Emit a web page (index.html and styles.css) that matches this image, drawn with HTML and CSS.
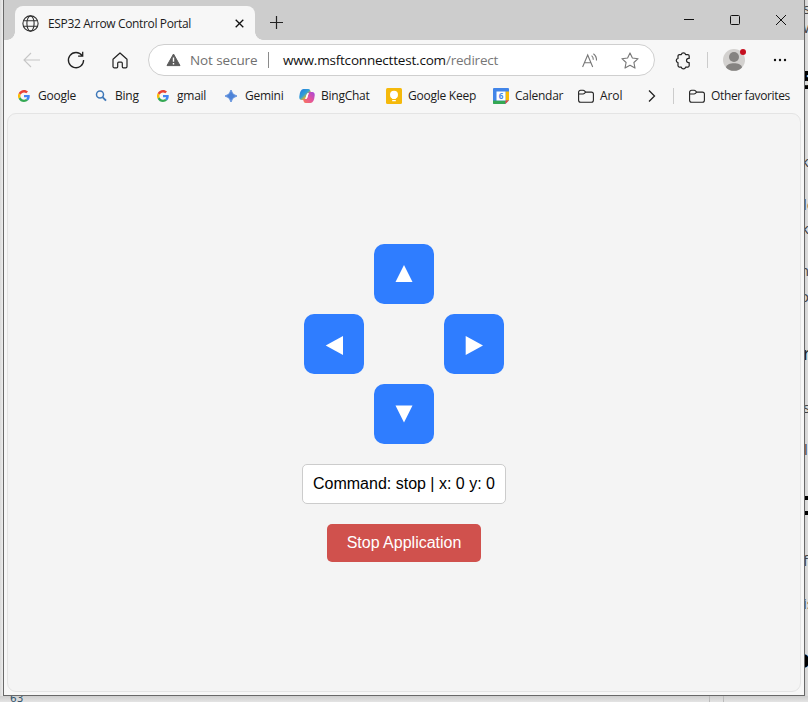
FILE: index.html
```html
<!DOCTYPE html>
<html lang="en">
<head>
<meta charset="utf-8">
<title>ESP32 Arrow Control Portal</title>
<link rel="stylesheet" href="styles.css">
</head>
<body>
<svg width="0" height="0" class="defs">
  <defs>
    <linearGradient id="cop" x1="0" y1="0" x2="1" y2="1"><stop offset="0" stop-color="#2478dd"/><stop offset=".45" stop-color="#2f9fd8"/><stop offset=".65" stop-color="#d9b633"/><stop offset="1" stop-color="#f3a433"/></linearGradient>
    <linearGradient id="cop2" x1="1" y1="0" x2="0" y2="1"><stop offset="0" stop-color="#a447dc"/><stop offset=".5" stop-color="#e3539c"/><stop offset="1" stop-color="#fb7b55"/></linearGradient>
    <symbol id="g" viewBox="0 0 48 48"><path fill="#ea4335" d="M24 9.5c3.5 0 6.700 1.200 9.200 3.600l6.900-6.900C35.900 2.400 30.500 0 24 0 14.600 0 6.500 5.400 2.600 13.200l8 6.200C12.400 13.700 17.700 9.500 24 9.500z"/><path fill="#4285f4" d="M47 24.500c0-1.600-.2-3.100-.4-4.500H24v9h12.900c-.6 3-2.300 5.500-4.800 7.200l7.700 6C44.400 38 47 31.800 47 24.500z"/><path fill="#fbbc05" d="M10.500 28.600a14.500 14.500 0 0 1 0-9.200l-8-6.200a24 24 0 0 0 0 21.600z"/><path fill="#34a853" d="M24 48c6.500 0 11.900-2.100 15.900-5.800l-7.700-6c-2.200 1.500-4.900 2.300-8.200 2.300-6.300 0-11.600-4.200-13.500-9.900l-8 6.200C6.500 42.600 14.600 48 24 48z"/></symbol>
    <symbol id="folder" viewBox="0 0 16 16"><path d="M.6 4.200a2 2 0 0 1 2-2h2.600c.6 0 .9.200 1.300.6l1.200 1.300h5.700a2 2 0 0 1 2 2v6.100a2 2 0 0 1-2 2H2.600a2 2 0 0 1-2-2zM.6 6h4.500c.6 0 .9-.2 1.300-.6l1.300-1.300" fill="none" stroke="#222" stroke-width="1.100"/></symbol>
  </defs>
</svg>
<div class="backdrop">
  <div class="side">
    <span class="s1">s</span><span class="s2">w</span><span class="s3 bold">5</span><span class="s4">c</span><span class="s5">k</span><span class="s6">lo</span><span class="s7">k</span><span class="s8">n</span><span class="s9">o</span><span class="s10 bold2">r</span><span class="s11">s</span><span class="s12">l</span><span class="s13"></span><span class="s14">f</span><span class="s15">is</span><span class="s16 bold">o</span>
  </div>
  <div class="foot"><span class="line-no">63</span><i class="guide"></i></div>
</div>
<div class="window">
  <header class="titlebar">
    <div class="tab">
      <svg class="globe" width="17" height="17" viewBox="0 0 17 17" fill="none" stroke="#303030" stroke-width="1.100"><circle cx="8.500" cy="8.500" r="7.600"/><ellipse cx="8.500" cy="8.500" rx="3.600" ry="7.600"/><path d="M1.600 5.700h13.800M1.600 11.300h13.800"/></svg>
      <span class="tab-title">ESP32 Arrow Control Portal</span>
      <svg class="tab-close" width="9" height="9" viewBox="0 0 9 9"><path d="M.7.7l7.600 7.600M8.300.7L.7 8.300" stroke="#111" stroke-width="1.300"/></svg>
    </div>
    <svg class="new-tab" width="14" height="14" viewBox="0 0 14 14"><path d="M6.500 0v13M0 6.500h13" stroke="#222" stroke-width="1.200"/></svg>
    <div class="caption">
      <svg width="46" height="40" viewBox="0 0 46 40"><path d="M18 19.500h10" stroke="#111"/></svg>
      <svg width="46" height="40" viewBox="0 0 46 40"><rect x="18.500" y="15.500" width="9" height="9" rx="1" fill="none" stroke="#111"/></svg>
      <svg width="46" height="40" viewBox="0 0 46 40"><path d="M18 15l10 10M28 15L18 25" stroke="#111"/></svg>
    </div>
  </header>
  <nav class="toolbar">
    <svg class="back" width="17" height="16" viewBox="0 0 17 16" fill="none" stroke="#c6c6c6" stroke-width="1.100"><path d="M17 8H1M8 1L1 8l7 7"/></svg>
    <svg class="reload" width="18" height="18" viewBox="0 0 18 18" fill="none" stroke="#222" stroke-width="1.300"><path d="M15.200 4.700A7.600 7.600 0 1 0 16.600 9M15.700.8v4.400h-4.600"/></svg>
    <svg class="home" width="16" height="17" viewBox="0 0 16 17" fill="none" stroke="#222" stroke-width="1.200" stroke-linejoin="round"><path d="M1 7.300L8 1l7 6.300v7.200a1.300 1.300 0 0 1-1.300 1.300h-2.400a1 1 0 0 1-1-1v-3.600a1 1 0 0 0-1-1H6.700a1 1 0 0 0-1 1v3.600a1 1 0 0 1-1 1H2.300A1.300 1.300 0 0 1 1 14.500z"/></svg>
    <div class="address">
      <svg class="warn" width="15" height="14" viewBox="0 0 15 14"><path d="M7.500 1L14 12.600H1z" fill="#5c5c5c" stroke="#5c5c5c" stroke-linejoin="round"/><path d="M7.500 4.500v4.300M7.500 10v1.500" stroke="#fff" stroke-width="1.400"/></svg>
      <span class="not-secure">Not secure</span>
      <i class="url-sep"></i>
      <span class="url"><span class="host">www.msftconnecttest.com</span><span class="path">/redirect</span></span>
      <svg class="read" width="16" height="15" viewBox="0 0 16 15" fill="none" stroke="#777" stroke-width="1.100"><path d="M.6 14L5.700 2l5 12M2.500 9.800h6.400M9.600 2.600q1.800 1.400 1.700 4.100M11.400.7q3.300 2.300 3.100 6.900"/></svg>
      <svg class="star" width="18" height="17" viewBox="0 0 18 17" fill="none" stroke="#777" stroke-width="1.100" stroke-linejoin="round"><path d="M9 .9l2.400 5.100 5.700.7-4.200 3.800 1.100 5.600L9 13.300l-5 2.800 1.100-5.600L.9 6.700l5.700-.7z"/></svg>
    </div>
    <svg class="ext" width="16" height="17" viewBox="0 0 16 17" fill="none" stroke="#222" stroke-width="1.200" stroke-linejoin="round"><path d="M4.500 2.600h1.800a2.200 2.200 0 0 1 4.300 0h2.100a1.500 1.500 0 0 1 1.500 1.500v2.300h-.6a2.100 2.100 0 0 0 0 4.200h.6v3a1.500 1.500 0 0 1-1.500 1.500h-2.100a2.200 2.200 0 0 1-4.300 0H4.500A1.500 1.500 0 0 1 3 13.600v-2.900a2.200 2.200 0 0 1 0-4.300V4.100a1.500 1.500 0 0 1 1.500-1.500z"/></svg>
    <i class="tool-sep"></i>
    <svg class="avatar" width="25" height="24" viewBox="0 0 25 24"><circle cx="11" cy="13" r="11" fill="#d3d1cf"/><circle cx="11" cy="10" r="5" fill="#858381"/><path d="M3 20.400C3.500 14.800 18.500 14.800 19 20.400A11 11 0 0 1 3 20.400z" fill="#858381"/><circle cx="20" cy="5" r="3" fill="#c50f1f"/></svg>
    <svg class="more" width="14" height="4" viewBox="0 0 14 4" fill="#111"><circle cx="2" cy="2" r="1.200"/><circle cx="7" cy="2" r="1.200"/><circle cx="12" cy="2" r="1.200"/></svg>
  </nav>
  <div class="favorites">
    <a class="fav"><svg class="small"><use href="#g"/></svg><span>Google</span></a>
    <a class="fav"><svg viewBox="0 0 16 16" fill="none" stroke="#3f78b8"><circle cx="7" cy="6.500" r="3.500" stroke-width="1.500"/><path d="M9.500 9.200l3.500 3.500" stroke-width="1.900"/></svg><span>Bing</span></a>
    <a class="fav"><svg class="small"><use href="#g"/></svg><span>gmail</span></a>
    <a class="fav"><svg viewBox="0 0 16 16"><path d="M8 2Q9 7 14 8 9 9 8 14 7 9 2 8 7 7 8 2z" fill="#4d83d8" stroke="#4d83d8" stroke-width=".8"/></svg><span>Gemini</span></a>
    <a class="fav"><svg viewBox="0 0 16 16"><path d="M4.500 1h5q1.500 0 2 2l.5 2H9.500Q8 5 7.500 7L6 12H2.800Q0 12 .3 8.500 1 1 4.500 1z" fill="url(#cop)"/><path d="M11.500 15h-5q-1.500 0-2-2L4 11h2.500Q8 11 8.500 9L10 4h3.200Q16 4 15.700 7.500 15 15 11.500 15z" fill="url(#cop2)"/><path d="M9.700 5L8.400 9.500Q8 11 6.300 11l1.200-4Q8 5 9.700 5z" fill="#fff"/></svg><span>BingChat</span></a>
    <a class="fav"><svg viewBox="0 0 16 16"><rect width="16" height="16" rx="1.500" fill="#f5b90b"/><circle cx="8" cy="6.800" r="4" fill="#fff"/><path d="M6.200 9h3.600v2H6.200zM6.200 12h3.600v1.200H6.200z" fill="#fff"/></svg><span>Google Keep</span></a>
    <a class="fav"><svg viewBox="0 0 16 16"><rect width="16" height="16" rx="1" fill="#4285e8"/><path d="M12.500 3.500H16v9h-3.500z" fill="#fbbc04"/><path d="M0 12.500h12.500V16H1q-1 0-1-1z" fill="#34a853"/><path d="M12.500 12.500H16L12.500 16z" fill="#ea4335"/><path d="M16 12.500V16h-3.500z" fill="#f6f6f6"/><path d="M3.500 3.500h9v9h-9z" fill="#fff"/><text x="8" y="11.300" text-anchor="middle" class="day">6</text></svg><span>Calendar</span></a>
    <a class="fav"><svg><use href="#folder"/></svg><span class="t-arol">Arol</span></a>
    <svg class="chev" width="8" height="14" viewBox="0 0 8 14"><path d="M1 1.500L6.500 7 1 12.500" fill="none" stroke="#222" stroke-width="1.300"/></svg>
    <i class="fav-sep"></i>
    <a class="fav"><svg><use href="#folder"/></svg><span class="t-other">Other favorites</span></a>
  </div>
  <main class="page">
    <div class="pad">
      <button class="up"><svg width="18" height="20" viewBox="0 0 18 20"><path d="M9 1l8.500 17H.5z"/></svg></button>
      <button class="left"><svg width="18" height="20" viewBox="0 0 18 20"><path d="M.7 11.500L18 2v19z"/></svg></button>
      <button class="right"><svg width="18" height="20" viewBox="0 0 18 20"><path d="M18 11.500L.7 2v19z"/></svg></button>
      <button class="down"><svg width="18" height="20" viewBox="0 0 18 20"><path d="M9 18.500L17.500 1.500H.5z"/></svg></button>
    </div>
    <div class="status">Command: stop | x: 0 y: 0</div>
    <button class="stop">Stop Application</button>
  </main>
</div>
</body>
</html>
```
FILE: styles.css
```css
* { box-sizing: border-box; }
body { margin: 0; width: 808px; height: 702px; overflow: hidden; position: relative; background: #dedede; font-family: "Open Sans", "Noto Sans", sans-serif; color: #1b1b1b; }
svg { display: block; flex: none; overflow: visible; }
i { display: block; flex: none; }
.defs { position: absolute; }
.backdrop { position: absolute; inset: 0; overflow: hidden; background: linear-gradient(90deg, #d9d9d9, #eee 3px, #eee 300px, #d2d2d2 804px, #dedede); }
.side span { position: absolute; left: 803px; font-size: 15px; line-height: 20px; color: #444; white-space: nowrap; }
.side .bold { font-size: 24px; line-height: 28px; font-weight: 800; color: #000; left: 801px; }
.side .bold2 { font-size: 19px; font-weight: 400; color: #222; }
.side .s1 { top: -2px; } .side .s2 { top: 17px; } .side .s3 { top: 66px; } .side .s4 { top: 125px; left: 798px; }
.side .s5 { top: 151px; left: 801px; } .side .s6 { top: 194px; } .side .s7 { top: 218px; left: 801px; } .side .s8 { top: 260px; left: 800px; }
.side .s9 { top: 286px; left: 800px; } .side .s10 { top: 343px; } .side .s11 { top: 397px; } .side .s12 { top: 439px; left: 804px; }
.side .s13 { top: 496px; left: 804px; width: 4px; height: 19px; border-top: 4px solid #000; border-bottom: 4px solid #000; }
.side .s14 { top: 550px; } .side .s15 { top: 593px; } .side .s16 { top: 645px; left: 795px; }
.foot { position: absolute; left: 0; bottom: 0; width: 808px; height: 6px; background: linear-gradient(#cfcfcf, #e4e4e4); display: flex; }
.line-no { font-family: "DejaVu Sans", sans-serif; font-size: 10.500px; line-height: 12px; color: #35556d; margin: -4px 0 0 10px; width: 699px; height: 12px; }
.guide { width: 15px; height: 6px; border: solid #bbb; border-width: 0 1px; }
.window { position: relative; margin-left: 3px; width: 802px; height: 696px; border: 1px solid #686868; border-top: 0; background: #f7f7f7; display: flex; flex-direction: column; }
.titlebar { height: 40px; background: #cdcdcd; display: flex; }
.tab { width: 240px; height: 34px; margin: 6px 0 0 11px; background: #f7f7f7; border-radius: 8px 8px 0 0; display: flex; align-items: center; padding-left: 7px; position: relative; }
.tab::before, .tab::after { content: ""; position: absolute; bottom: 0; width: 8px; height: 8px; }
.tab::before { left: -8px; background: radial-gradient(circle at 0 0, transparent 7.500px, #f7f7f7 8px); }
.tab::after { right: -8px; background: radial-gradient(circle at 100% 0, transparent 7.500px, #f7f7f7 8px); }
.tab-title { font-size: 12px; width: 187px; margin-left: 9px; white-space: nowrap; letter-spacing: -.36px; }
.new-tab { margin: 16px 0 0 15px; }
.caption { display: flex; margin-left: auto; }
.toolbar { height: 40px; display: flex; align-items: center; }
.back { margin-left: 19px; }
.reload { margin-left: 27px; }
.home { margin-left: 27px; }
.address { width: 507px; height: 32px; margin-left: 20px; border: 1px solid #cfcfcf; border-radius: 16px; background: #fff; display: flex; align-items: center; font-size: 13.500px; white-space: nowrap; }
.warn { margin-left: 17px; }
.not-secure { color: #707070; width: 68px; margin-left: 9px; letter-spacing: -.1px; }
.url-sep { width: 1px; height: 16px; background: #8b8b8b; margin-left: 10px; }
.url { width: 299px; margin-left: 14px; color: #111; letter-spacing: -.2px; }
.path { color: #777; }
.star { margin-left: 23px; }
.ext { margin-left: 20px; }
.tool-sep { width: 1px; height: 16px; background: #ccc; margin-left: 16px; }
.avatar { margin: -2px 0 0 15px; }
.more { margin-left: 25px; }
.favorites { height: 33px; padding-bottom: 1px; display: grid; align-items: center; grid-template-columns: 77px 62px 68px 76px 87px 107px 85px 70px 25px 16px 101px; padding-left: 12px; font-size: 12px; letter-spacing: -.25px; }
.fav { display: flex; align-items: center; gap: 6px; white-space: nowrap; }
.fav svg { width: 16px; height: 16px; }
.fav svg.small { padding: 2px; }
.fav span { line-height: 16px; }
.fav .t-arol { letter-spacing: -.1px; }
.fav .t-other { letter-spacing: -.36px; }
.day { font: 700 8px "Open Sans", sans-serif; fill: #4285e8; }
.fav-sep { width: 1px; height: 16px; background: #ccc; }
.page { width: 794px; height: 579px; margin-left: 3px; border: 1px solid #e4e4e4; border-radius: 9px; background: #f4f4f4; display: flex; flex-direction: column; align-items: center; padding-top: 130px; font-family: "Liberation Sans", Arial, sans-serif; }
button { border: 0; padding: 0; font: inherit; color: #fff; }
.pad { display: grid; grid-template-columns: repeat(3, 60px); grid-template-rows: repeat(3, 60px); gap: 10px; }
.pad button { background: #2f7dff; border-radius: 10px; display: flex; align-items: center; justify-content: center; fill: #fff; }
.up { grid-area: 1 / 2; } .left { grid-area: 2 / 1; } .right { grid-area: 2 / 3; } .down { grid-area: 3 / 2; }
.status { margin-top: 20px; width: 204px; height: 40px; border: 1px solid #ccc; border-radius: 5px; background: #fff; font-size: 16px; line-height: 38px; text-align: center; color: #000; white-space: nowrap; }
.stop { margin-top: 20px; width: 154px; height: 38px; border-radius: 5px; background: #d0514d; font-size: 16px; }
```
